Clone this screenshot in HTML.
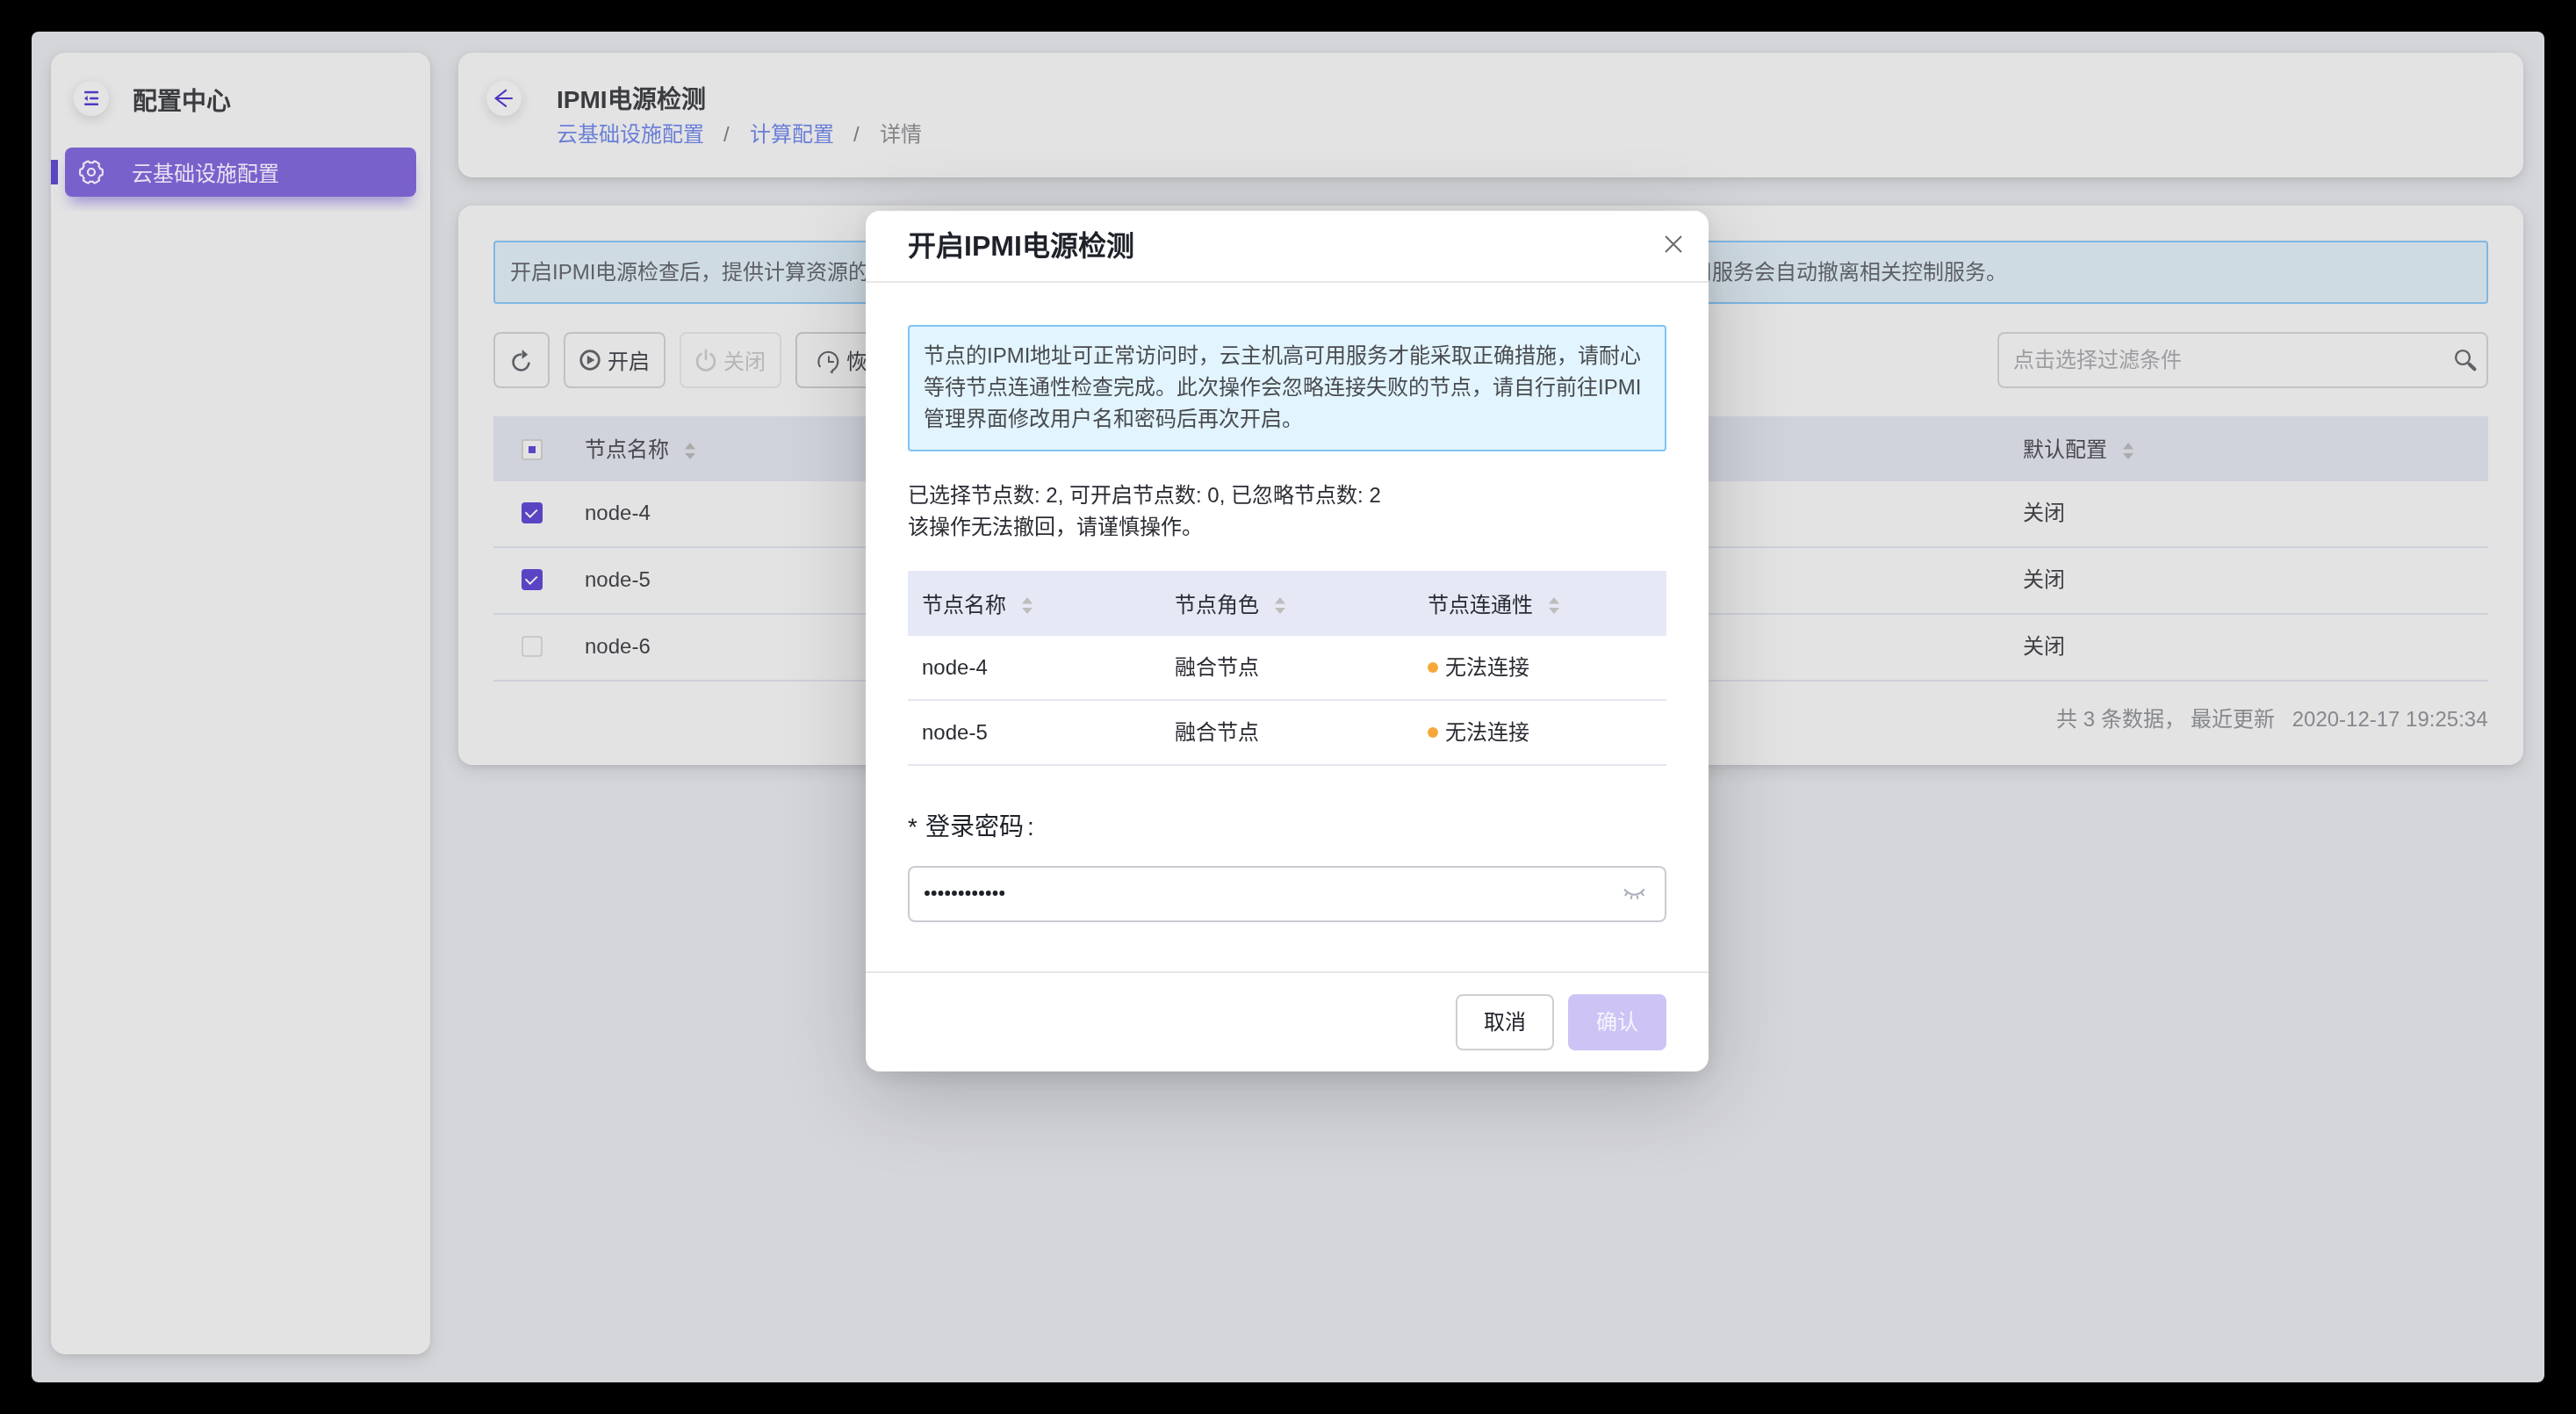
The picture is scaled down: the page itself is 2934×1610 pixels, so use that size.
<!DOCTYPE html>
<html lang="zh-CN"><head><meta charset="utf-8">
<style>
*{box-sizing:border-box;margin:0;padding:0}
html,body{width:2934px;height:1610px;overflow:hidden;background:#000}
body{font-family:"Liberation Sans",sans-serif;position:relative}
.a{position:absolute}
.t{position:absolute;white-space:nowrap;will-change:transform}
svg{position:absolute;overflow:visible}
</style></head><body>
<!-- window -->
<div class="a" style="left:36px;top:36px;width:2862px;height:1538px;background:#d5d6da;border-radius:8px"></div>

<!-- sidebar -->
<div class="a" style="left:58px;top:60px;width:432px;height:1482px;background:#e3e3e3;border-radius:16px;box-shadow:0 6px 20px rgba(0,0,0,0.10),0 2px 6px rgba(0,0,0,0.07)"></div>
<div class="a" style="left:84px;top:92px;width:40px;height:40px;border-radius:50%;background:#e4e4e4;box-shadow:0 4px 14px rgba(0,0,0,0.13)"></div>
<svg style="left:96px;top:103px" width="18" height="18" viewBox="0 0 18 18">
 <path d="M1.2,2.1H15M7.2,9H15M1.2,15.8H15" stroke="#5038c0" stroke-width="2.5" stroke-linecap="round" fill="none"/>
 <path d="M0,9L3.8,6V12Z" fill="#5038c0"/>
</svg>
<div class="t" style="left:151px;top:97px;font-size:28px;line-height:38px;font-weight:bold;color:#3b3c3f">配置中心</div>

<div class="a" style="left:74px;top:168px;width:400px;height:56px;background:#7961cc;border-radius:8px;box-shadow:0 12px 16px -6px rgba(100,75,200,0.55)"></div>
<div class="a" style="left:66px;top:240px;width:420px;height:20px;background:#e3e3e3"></div>
<div class="a" style="left:58px;top:182px;width:8px;height:28px;background:#5a46c1"></div>
<svg style="left:90px;top:182px" width="28" height="28" viewBox="0 0 28 28">
 <path d="M26.90,14.00 L26.90,14.34 L26.88,14.68 L26.86,15.01 L26.83,15.35 L26.79,15.68 L26.74,16.02 L26.68,16.35 L26.62,16.68 L26.54,17.01 L26.36,17.31 L25.76,17.48 L25.18,17.63 L24.62,17.76 L24.10,17.88 L23.98,18.13 L23.87,18.39 L23.75,18.65 L23.62,18.90 L23.49,19.15 L23.35,19.40 L23.21,19.64 L23.06,19.88 L22.90,20.12 L22.74,20.35 L22.57,20.57 L22.41,20.81 L22.57,21.32 L22.74,21.87 L22.90,22.45 L23.05,23.05 L22.88,23.36 L22.63,23.59 L22.38,23.81 L22.12,24.03 L21.85,24.23 L21.58,24.44 L21.31,24.63 L21.03,24.82 L20.74,25.00 L20.45,25.17 L20.16,25.34 L19.86,25.49 L19.55,25.64 L19.25,25.78 L18.94,25.92 L18.62,26.04 L18.31,26.16 L17.99,26.27 L17.66,26.37 L17.31,26.36 L16.86,25.93 L16.44,25.50 L16.05,25.08 L15.69,24.69 L15.41,24.71 L15.13,24.74 L14.85,24.77 L14.57,24.79 L14.28,24.80 L14.00,24.80 L13.72,24.80 L13.43,24.79 L13.15,24.77 L12.87,24.74 L12.59,24.71 L12.31,24.69 L11.95,25.08 L11.56,25.50 L11.14,25.93 L10.69,26.36 L10.34,26.37 L10.01,26.27 L9.69,26.16 L9.38,26.04 L9.06,25.92 L8.75,25.78 L8.45,25.64 L8.14,25.49 L7.84,25.34 L7.55,25.17 L7.26,25.00 L6.97,24.82 L6.69,24.63 L6.42,24.44 L6.15,24.23 L5.88,24.03 L5.62,23.81 L5.37,23.59 L5.12,23.36 L4.95,23.05 L5.10,22.45 L5.26,21.87 L5.43,21.32 L5.59,20.81 L5.43,20.57 L5.26,20.35 L5.10,20.12 L4.94,19.88 L4.79,19.64 L4.65,19.40 L4.51,19.15 L4.38,18.90 L4.25,18.65 L4.13,18.39 L4.02,18.13 L3.90,17.88 L3.38,17.76 L2.82,17.63 L2.24,17.48 L1.64,17.31 L1.46,17.01 L1.38,16.68 L1.32,16.35 L1.26,16.02 L1.21,15.68 L1.17,15.35 L1.14,15.01 L1.12,14.68 L1.10,14.34 L1.10,14.00 L1.10,13.66 L1.12,13.32 L1.14,12.99 L1.17,12.65 L1.21,12.32 L1.26,11.98 L1.32,11.65 L1.38,11.32 L1.46,10.99 L1.64,10.69 L2.24,10.52 L2.82,10.37 L3.38,10.24 L3.90,10.12 L4.02,9.87 L4.13,9.61 L4.25,9.35 L4.38,9.10 L4.51,8.85 L4.65,8.60 L4.79,8.36 L4.94,8.12 L5.10,7.88 L5.26,7.65 L5.43,7.43 L5.59,7.19 L5.43,6.68 L5.26,6.13 L5.10,5.55 L4.95,4.95 L5.12,4.64 L5.37,4.41 L5.62,4.19 L5.88,3.97 L6.15,3.77 L6.42,3.56 L6.69,3.37 L6.97,3.18 L7.26,3.00 L7.55,2.83 L7.84,2.66 L8.14,2.51 L8.45,2.36 L8.75,2.22 L9.06,2.08 L9.38,1.96 L9.69,1.84 L10.01,1.73 L10.34,1.63 L10.69,1.64 L11.14,2.07 L11.56,2.50 L11.95,2.92 L12.31,3.31 L12.59,3.29 L12.87,3.26 L13.15,3.23 L13.43,3.21 L13.72,3.20 L14.00,3.20 L14.28,3.20 L14.57,3.21 L14.85,3.23 L15.13,3.26 L15.41,3.29 L15.69,3.31 L16.05,2.92 L16.44,2.50 L16.86,2.07 L17.31,1.64 L17.66,1.63 L17.99,1.73 L18.31,1.84 L18.62,1.96 L18.94,2.08 L19.25,2.22 L19.55,2.36 L19.86,2.51 L20.16,2.66 L20.45,2.83 L20.74,3.00 L21.03,3.18 L21.31,3.37 L21.58,3.56 L21.85,3.77 L22.12,3.97 L22.38,4.19 L22.63,4.41 L22.88,4.64 L23.05,4.95 L22.90,5.55 L22.74,6.13 L22.57,6.68 L22.41,7.19 L22.57,7.43 L22.74,7.65 L22.90,7.88 L23.06,8.12 L23.21,8.36 L23.35,8.60 L23.49,8.85 L23.62,9.10 L23.75,9.35 L23.87,9.61 L23.98,9.87 L24.10,10.12 L24.62,10.24 L25.18,10.37 L25.76,10.52 L26.36,10.69 L26.54,10.99 L26.62,11.32 L26.68,11.65 L26.74,11.98 L26.79,12.32 L26.83,12.65 L26.86,12.99 L26.88,13.32 L26.90,13.66Z" stroke="#e9e6f2" stroke-width="2.2" stroke-linejoin="round" fill="none"/>
 <circle cx="14" cy="14" r="4" stroke="#e9e6f2" stroke-width="2.2" fill="none"/>
</svg>
<div class="t" style="left:150px;top:180px;font-size:24px;line-height:36px;color:#e6e3f1">云基础设施配置</div>

<!-- header panel -->
<div class="a" style="left:522px;top:60px;width:2352px;height:142px;background:#e3e3e3;border-radius:16px;box-shadow:0 6px 20px rgba(0,0,0,0.10),0 2px 6px rgba(0,0,0,0.07)"></div>
<div class="a" style="left:554px;top:92px;width:40px;height:40px;border-radius:50%;background:#e4e4e4;box-shadow:0 4px 14px rgba(0,0,0,0.13)"></div>
<svg style="left:564px;top:102px" width="20" height="20" viewBox="0 0 20 20">
 <path d="M19.8,10H0.6M12.8,0.4L0.6,10L12.8,19.4" stroke="#4e34bf" stroke-width="2" fill="none"/>
</svg>
<div class="t" style="left:634px;top:95px;font-size:28px;line-height:38px;font-weight:bold;color:#3b3c40">IPMI电源检测</div>
<div class="t" style="left:634px;top:135px;font-size:24px;line-height:36px;color:#6a7fd7">云基础设施配置</div>
<div class="t" style="left:824px;top:135px;font-size:24px;line-height:36px;color:#76777b">/</div>
<div class="t" style="left:854px;top:135px;font-size:24px;line-height:36px;color:#6a7fd7">计算配置</div>
<div class="t" style="left:972px;top:135px;font-size:24px;line-height:36px;color:#76777b">/</div>
<div class="t" style="left:1002px;top:135px;font-size:24px;line-height:36px;color:#85868a">详情</div>

<!-- main panel -->
<div class="a" style="left:522px;top:234px;width:2352px;height:637px;background:#e3e3e3;border-radius:16px;box-shadow:0 6px 20px rgba(0,0,0,0.10),0 2px 6px rgba(0,0,0,0.07)"></div>
<div class="a" style="left:562px;top:274px;width:2272px;height:72px;background:#cfdbe3;border:2px solid #80b7e4;border-radius:4px"></div>
<div class="t" style="left:581px;top:292px;font-size:24px;line-height:36px;color:#5d6066">开启IPMI电源检查后，提供计算资源的节点出现异常时，云主机高可用</div>
<div class="t" style="left:1926px;top:292px;font-size:24px;line-height:36px;color:#5d6066">用服务会自动撤离相关控制服务。</div>

<!-- toolbar -->
<div class="a" style="left:562px;top:378px;width:64px;height:64px;border:2px solid #c2c2c2;border-radius:8px"></div>
<svg style="left:582px;top:398px" width="24" height="26" viewBox="0 0 24 26">
 <path d="M20.5,14.5A9,9 0 1 1 12,5.5" stroke="#5b5e63" stroke-width="2.6" fill="none"/>
 <path d="M12.6,0L19.2,5.7L12.6,10.7Z" fill="#5b5e63"/>
</svg>
<div class="a" style="left:642px;top:378px;width:116px;height:64px;border:2px solid #c2c2c2;border-radius:8px"></div>
<svg style="left:660px;top:398px" width="24" height="24" viewBox="0 0 24 24">
 <circle cx="12" cy="12" r="10.3" stroke="#5b5e63" stroke-width="2.7" fill="none"/>
 <path d="M8.8,6.8L17.3,11.9L8.8,17Z" fill="#5b5e63"/>
</svg>
<div class="t" style="left:692px;top:394px;font-size:24px;line-height:36px;color:#3e4047">开启</div>
<div class="a" style="left:774px;top:378px;width:116px;height:64px;border:2px solid #d3d3d3;border-radius:8px"></div>
<svg style="left:792px;top:398px" width="24" height="24" viewBox="0 0 24 24">
 <path d="M6.5,5.2A10,10 0 1 0 17.5,5.2" stroke="#bcbdc0" stroke-width="2.7" fill="none" stroke-linecap="round"/>
 <path d="M12,1.2V11" stroke="#bcbdc0" stroke-width="2.7" fill="none" stroke-linecap="round"/>
</svg>
<div class="t" style="left:824px;top:394px;font-size:24px;line-height:36px;color:#b5b6b9">关闭</div>
<div class="a" style="left:906px;top:378px;width:130px;height:64px;border:2px solid #bdbdbd;border-radius:8px"></div>
<svg style="left:932px;top:400px" width="24" height="24" viewBox="0 0 24 24">
 <path d="M2.2,18A11,11 0 1 1 15.5,22" stroke="#5b5e63" stroke-width="2" fill="none"/>
 <path d="M12,5.5V12H18" stroke="#5b5e63" stroke-width="2" fill="none"/>
 <path d="M13,23.5L17.8,20.5L16.2,25.5Z" fill="#5b5e63"/>
</svg>
<div class="t" style="left:964px;top:394px;font-size:24px;line-height:36px;color:#3e4047">恢复</div>

<div class="a" style="left:2275px;top:378px;width:559px;height:64px;border:2px solid #c3c3c7;border-radius:8px"></div>
<div class="t" style="left:2293px;top:392px;font-size:24px;line-height:36px;color:#9c9da1">点击选择过滤条件</div>
<svg style="left:2795px;top:397px" width="26" height="26" viewBox="0 0 26 26">
 <circle cx="10" cy="10" r="7.9" stroke="#5f6268" stroke-width="2.4" fill="none"/>
 <path d="M17.6,17.8L23.4,23.3" stroke="#5f6268" stroke-width="4.2" stroke-linecap="round"/>
</svg>

<!-- bg table -->
<div class="a" style="left:562px;top:474px;width:2272px;height:74px;background:#d0d3dc"></div>
<div class="a" style="left:594px;top:500px;width:24px;height:24px;border:2px solid #c1c1c1;background:#e3e3e3;border-radius:3px"></div>
<div class="a" style="left:602px;top:508px;width:8px;height:8px;background:#5a45c3"></div>
<div class="t" style="left:666px;top:494px;font-size:24px;line-height:36px;color:#48494e">节点名称</div>
<svg style="left:780px;top:504px" width="12" height="19" viewBox="0 0 12 19">
 <path d="M6,0L12,7.5H0Z M0,12H12L6,19Z" fill="#ababab"/>
</svg>
<div class="t" style="left:2304px;top:494px;font-size:24px;line-height:36px;color:#48494e">默认配置</div>
<svg style="left:2418px;top:504px" width="12" height="19" viewBox="0 0 12 19">
 <path d="M6,0L12,7.5H0Z M0,12H12L6,19Z" fill="#ababab"/>
</svg>

<div class="a" style="left:562px;top:622px;width:2272px;height:2px;background:#cdd1da"></div>
<div class="a" style="left:562px;top:698px;width:2272px;height:2px;background:#cdd1da"></div>
<div class="a" style="left:562px;top:774px;width:2272px;height:2px;background:#cdd1da"></div>

<div class="a" style="left:594px;top:572px;width:24px;height:24px;background:#5b44c3;border-radius:4px"></div>
<svg style="left:594px;top:572px" width="24" height="24" viewBox="0 0 24 24"><path d="M4.6,11.4L9.7,16.6L17.8,8.6" stroke="#eeeeea" stroke-width="2" fill="none"/></svg>
<div class="a" style="left:594px;top:648px;width:24px;height:24px;background:#5b44c3;border-radius:4px"></div>
<svg style="left:594px;top:648px" width="24" height="24" viewBox="0 0 24 24"><path d="M4.6,11.4L9.7,16.6L17.8,8.6" stroke="#eeeeea" stroke-width="2" fill="none"/></svg>
<div class="a" style="left:594px;top:724px;width:24px;height:24px;border:2px solid #c9c9c9;border-radius:4px"></div>

<div class="t" style="left:666px;top:566px;font-size:24px;line-height:36px;color:#3e3f44">node-4</div>
<div class="t" style="left:666px;top:642px;font-size:24px;line-height:36px;color:#3e3f44">node-5</div>
<div class="t" style="left:666px;top:718px;font-size:24px;line-height:36px;color:#3e3f44">node-6</div>
<div class="t" style="left:2304px;top:566px;font-size:24px;line-height:36px;color:#3e3f44">关闭</div>
<div class="t" style="left:2304px;top:642px;font-size:24px;line-height:36px;color:#3e3f44">关闭</div>
<div class="t" style="left:2304px;top:718px;font-size:24px;line-height:36px;color:#3e3f44">关闭</div>

<div class="t" style="left:2342px;top:801px;font-size:24px;line-height:36px;color:#86888d">共 3 条数据，&nbsp;最近更新&nbsp;&nbsp;<span style="margin-left:6px">2020-12-17 19:25:34</span></div>

<!-- modal -->
<div class="a" style="left:986px;top:240px;width:960px;height:980px;background:#fff;border-radius:16px;box-shadow:0 24px 100px rgba(0,0,0,0.20),0 6px 24px rgba(0,0,0,0.10)"></div>
<div class="t" style="left:1034px;top:260px;font-size:32px;line-height:40px;font-weight:bold;color:#1f2129">开启IPMI电源检测</div>
<svg style="left:1896px;top:268px" width="20" height="20" viewBox="0 0 20 20">
 <path d="M1,1L19,19M19,1L1,19" stroke="#6b6b6b" stroke-width="2" fill="none"/>
</svg>
<div class="a" style="left:986px;top:320px;width:960px;height:2px;background:#e6e6e6"></div>

<div class="a" style="left:1034px;top:370px;width:864px;height:144px;background:#e2f4fd;border:2px solid #7fc4f5;border-radius:4px"></div>
<div class="a" style="left:1052px;top:387px;width:830px;will-change:transform;font-size:24px;line-height:36px;color:#484b50">节点的IPMI地址可正常访问时，云主机高可用服务才能采取正确措施，请耐心等待节点连通性检查完成。此次操作会忽略连接失败的节点，请自行前往IPMI管理界面修改用户名和密码后再次开启。</div>

<div class="t" style="left:1034px;top:546px;font-size:24px;line-height:36px;color:#2a2c33">已选择节点数: 2, 可开启节点数: 0, 已忽略节点数: 2</div>
<div class="t" style="left:1034px;top:582px;font-size:24px;line-height:36px;color:#2a2c33">该操作无法撤回，请谨慎操作。</div>

<div class="a" style="left:1034px;top:650px;width:864px;height:74px;background:#e6e9f5"></div>
<div class="t" style="left:1050px;top:671px;font-size:24px;line-height:36px;color:#2a2c33">节点名称</div>
<svg style="left:1164px;top:680px" width="12" height="19" viewBox="0 0 12 19"><path d="M6,0L12,7.5H0Z M0,12H12L6,19Z" fill="#bdbdbd"/></svg>
<div class="t" style="left:1338px;top:671px;font-size:24px;line-height:36px;color:#2a2c33">节点角色</div>
<svg style="left:1452px;top:680px" width="12" height="19" viewBox="0 0 12 19"><path d="M6,0L12,7.5H0Z M0,12H12L6,19Z" fill="#bdbdbd"/></svg>
<div class="t" style="left:1626px;top:671px;font-size:24px;line-height:36px;color:#2a2c33">节点连通性</div>
<svg style="left:1764px;top:680px" width="12" height="19" viewBox="0 0 12 19"><path d="M6,0L12,7.5H0Z M0,12H12L6,19Z" fill="#bdbdbd"/></svg>

<div class="a" style="left:1034px;top:796px;width:864px;height:2px;background:#e4e7f1"></div>
<div class="a" style="left:1034px;top:870px;width:864px;height:2px;background:#e4e7f1"></div>
<div class="t" style="left:1050px;top:742px;font-size:24px;line-height:36px;color:#2a2c33">node-4</div>
<div class="t" style="left:1338px;top:742px;font-size:24px;line-height:36px;color:#2a2c33">融合节点</div>
<div class="a" style="left:1626px;top:754px;width:12px;height:12px;border-radius:50%;background:#f5a83a"></div>
<div class="t" style="left:1646px;top:742px;font-size:24px;line-height:36px;color:#2a2c33">无法连接</div>
<div class="t" style="left:1050px;top:816px;font-size:24px;line-height:36px;color:#2a2c33">node-5</div>
<div class="t" style="left:1338px;top:816px;font-size:24px;line-height:36px;color:#2a2c33">融合节点</div>
<div class="a" style="left:1626px;top:828px;width:12px;height:12px;border-radius:50%;background:#f5a83a"></div>
<div class="t" style="left:1646px;top:816px;font-size:24px;line-height:36px;color:#2a2c33">无法连接</div>

<div class="t" style="left:1034px;top:922px;font-size:28px;line-height:40px;color:#1f2129">*</div>
<div class="t" style="left:1054px;top:922px;font-size:28px;line-height:40px;color:#1f2129">登录密码</div>
<div class="t" style="left:1170px;top:922px;font-size:28px;line-height:40px;color:#1f2129">:</div>
<div class="a" style="left:1034px;top:986px;width:864px;height:64px;border:2px solid #cbcbd3;border-radius:8px"></div>
<svg style="left:1053px;top:1014px" width="92" height="6" viewBox="0 0 92 6" fill="#1f2129"><circle cx="3.00" cy="3" r="2.9"/><circle cx="10.75" cy="3" r="2.9"/><circle cx="18.50" cy="3" r="2.9"/><circle cx="26.25" cy="3" r="2.9"/><circle cx="34.00" cy="3" r="2.9"/><circle cx="41.75" cy="3" r="2.9"/><circle cx="49.50" cy="3" r="2.9"/><circle cx="57.25" cy="3" r="2.9"/><circle cx="65.00" cy="3" r="2.9"/><circle cx="72.75" cy="3" r="2.9"/><circle cx="80.50" cy="3" r="2.9"/><circle cx="88.25" cy="3" r="2.9"/></svg>
<svg style="left:1849px;top:1011px" width="26" height="14" viewBox="0 0 26 14">
 <path d="M1,1.5Q12.5,14 24,1.5" stroke="#a9afbd" stroke-width="2" fill="none"/>
 <path d="M4.5,5.5L1.8,8.8M9.5,8.5L8.5,12.7M15.5,8.5L16.5,12.7M20.5,5.5L23.2,8.8" stroke="#a9afbd" stroke-width="2" fill="none"/>
</svg>

<div class="a" style="left:986px;top:1106px;width:960px;height:2px;background:#e6e6e6"></div>
<div class="a" style="left:1658px;top:1132px;width:112px;height:64px;border:2px solid #cfcfcf;border-radius:8px"></div>
<div class="t" style="left:1690px;top:1146px;font-size:24px;line-height:36px;color:#1f2129">取消</div>
<div class="a" style="left:1786px;top:1132px;width:112px;height:64px;background:#cdc4f5;border-radius:8px"></div>
<div class="t" style="left:1818px;top:1146px;font-size:24px;line-height:36px;color:#f6f4fd">确认</div>
</body></html>
